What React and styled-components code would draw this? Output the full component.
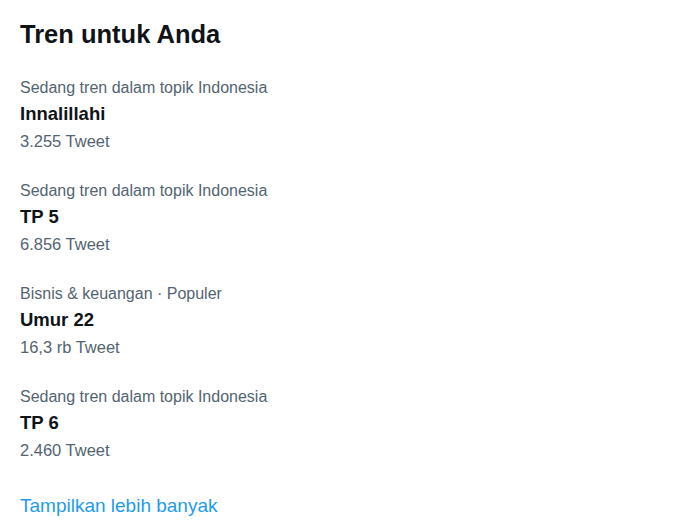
import React from "react";
import styled, { createGlobalStyle } from "styled-components";

const trends = [
  { context: "Sedang tren dalam topik Indonesia", name: "Innalillahi", count: "3.255 Tweet" },
  { context: "Sedang tren dalam topik Indonesia", name: "TP 5", count: "6.856 Tweet" },
  { context: "Bisnis & keuangan · Populer", name: "Umur 22", count: "16,3 rb Tweet" },
  { context: "Sedang tren dalam topik Indonesia", name: "TP 6", count: "2.460 Tweet" },
];

function App() {
  return (
    <>
      <GlobalStyle />
      <Panel>
        <Title>Tren untuk Anda</Title>
        <List>
          {trends.map((t, i) => (
            <Trend key={i}>
              <Context>{t.context}</Context>
              <Name>{t.name}</Name>
              <Count>{t.count}</Count>
            </Trend>
          ))}
        </List>
        <ShowMore href="#">Tampilkan lebih banyak</ShowMore>
      </Panel>
    </>
  );
}

export default App;

const GlobalStyle = createGlobalStyle`
  body {
    margin: 0;
    background: #fff;
    font-family: "Liberation Sans", Arial, sans-serif;
  }
`;

const Panel = styled.div`
  display: flex;
  flex-direction: column;
  padding: 20px 20px 0;
`;

const Title = styled.h2`
  margin: 0;
  font-size: 25.5px;
  line-height: 28px;
  font-weight: 700;
  color: #0f1419;
`;

const List = styled.div`
  display: flex;
  flex-direction: column;
  gap: 30px;
  margin-top: 30px;
`;

const Trend = styled.div`
  display: flex;
  flex-direction: column;
`;

const Context = styled.div`
  font-size: 16px;
  line-height: 20px;
  color: #536471;
`;

const Name = styled.div`
  margin-top: 3px;
  font-size: 18.5px;
  line-height: 26px;
  font-weight: 700;
  color: #0f1419;
`;

const Count = styled.div`
  margin-top: 4px;
  font-size: 16.5px;
  line-height: 20px;
  color: #536471;
`;

const ShowMore = styled.a`
  margin-top: 35px;
  font-size: 19px;
  line-height: 22px;
  color: #1d9bf0;
  text-decoration: none;
`;
